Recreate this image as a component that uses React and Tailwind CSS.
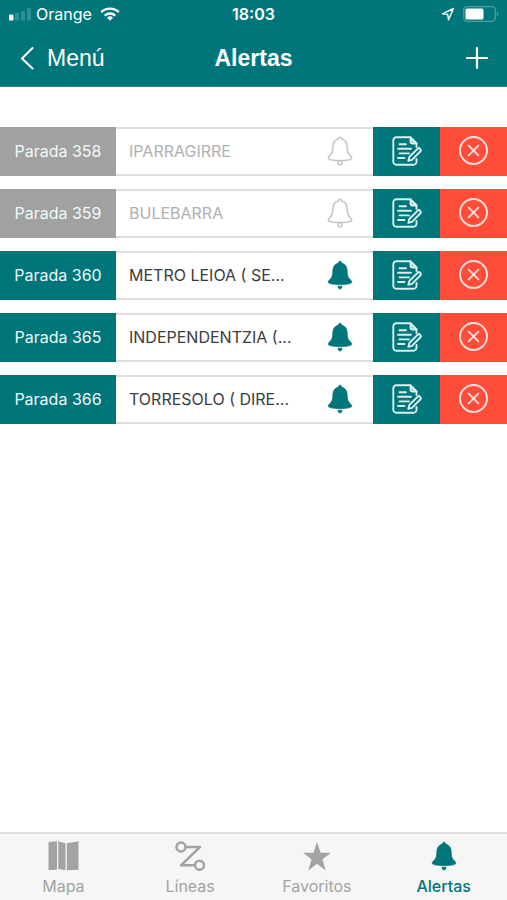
import React, { useState } from 'react';

const initialAlerts = [
  { stop: 358, name: 'IPARRAGIRRE', active: false },
  { stop: 359, name: 'BULEBARRA', active: false },
  { stop: 360, name: 'METRO LEIOA ( SE...', active: true },
  { stop: 365, name: 'INDEPENDENTZIA (...', active: true },
  { stop: 366, name: 'TORRESOLO ( DIRE...', active: true },
];

function BellIcon({ filled, className }) {
  return (
    <svg
      viewBox="0 0 26 30"
      className={className}
      fill={filled ? 'currentColor' : 'none'}
      stroke="currentColor"
      strokeWidth={filled ? 0.8 : 1.5}
      strokeLinejoin="round"
      aria-hidden="true"
    >
      <path d="M13 1.200c-1.100 0-1.700.9-1.500 1.900C8.100 3.900 6 6.500 5.900 10.200c-.1 4.600-.5 6.600-2.500 8.900C2.400 20.300 1.200 21.100 1.200 22.100c0 1.600 5.300 2.500 11.800 2.500s11.800-.9 11.800-2.500c0-1-1.200-1.800-2.200-3-2-2.300-2.400-4.300-2.500-8.900-.1-3.700-2.200-6.300-5.600-7.100.2-1-.4-1.900-1.500-1.900z" />
      {filled ? (
        <path d="M11 26.300h4c.1 1.500-.8 2.600-2 2.600s-2.100-1.100-2-2.600z" />
      ) : (
        <circle cx="13" cy="26.800" r="2" />
      )}
    </svg>
  );
}

function EditIcon() {
  return (
    <svg
      viewBox="0 0 30 30"
      className="w-[30px] h-[30px]"
      fill="none"
      stroke="currentColor"
      strokeWidth="1.9"
      strokeLinecap="round"
      strokeLinejoin="round"
      aria-hidden="true"
    >
      <path d="M24.500 11V7.500L18.500 1.300H4.300a3 3 0 0 0-3 3v21.400a3 3 0 0 0 3 3h17.200a3 3 0 0 0 3-3V23" />
      <path d="M18.500 1.300v4.200a2 2 0 0 0 2 2h4z" fill="currentColor" fillOpacity="0.6" />
      <path d="M7.500 8.200h6.500M6 12.800h13M7.500 17.400h9.500M6 22h6.500" />
      <path d="M16.300 24.900l1-3.900 8.200-8.200a1.900 1.900 0 0 1 2.700 2.700L20 23.900z" />
    </svg>
  );
}

function DeleteIcon() {
  return (
    <svg
      viewBox="0 0 30 30"
      className="w-[30px] h-[30px]"
      fill="none"
      stroke="currentColor"
      strokeWidth="1.9"
      strokeLinecap="round"
      aria-hidden="true"
    >
      <circle cx="14.500" cy="14.500" r="13.500" />
      <path d="M9.700 9.700l9.600 9.600M19.300 9.700l-9.600 9.600" />
    </svg>
  );
}

function MapIcon() {
  return (
    <svg viewBox="0 0 32 30" className="w-8 h-[30px]" fill="currentColor" aria-hidden="true">
      <path d="M1.500 1l8.500-.7v28.400l-8.500.3zM11.200.3l7.300 2v27l-7.300-1.400zM19.800 2.300L31.500.3v28.400l-11.700.6z" />
    </svg>
  );
}

function LinesIcon() {
  return (
    <svg
      viewBox="0 0 30 30"
      className="w-[30px] h-[30px]"
      fill="none"
      stroke="currentColor"
      strokeWidth="2.5"
      strokeLinejoin="round"
      aria-hidden="true"
    >
      <circle cx="6" cy="6" r="4.500" />
      <circle cx="24.500" cy="24.300" r="4.500" />
      <path d="M10.500 6H25L6 24.300h14" />
    </svg>
  );
}

function StarIcon() {
  return (
    <svg viewBox="0 0 30 30" className="w-[30px] h-[30px]" fill="currentColor" aria-hidden="true">
      <path d="M15 1l3.500 10.800H29l-8.500 6.400L23.600 29.500 15 22.800 6.400 29.500l3.100-11.300L1 11.800h10.500z" />
    </svg>
  );
}

function StatusBar() {
  return (
    <div className="grid grid-cols-3 items-center h-7 px-2">
      <div className="flex items-center gap-1">
        <svg viewBox="0 0 24 14" className="w-6 h-3.5" fill="currentColor" aria-hidden="true">
          <rect x="1" y="7.500" width="4.500" height="6" rx="1" />
          <g fill="#2a9294">
            <rect x="7" y="6" width="4" height="7.500" rx="1" />
            <rect x="13" y="4" width="4" height="9.500" rx="1" />
            <rect x="19" y="1" width="4" height="12.500" rx="1" />
          </g>
        </svg>
        <span className="text-base">Orange</span>
        <svg viewBox="0 0 20 14" className="w-5 h-3.5 ml-1" fill="none" stroke="currentColor" strokeWidth="2.400" aria-hidden="true">
          <path d="M1.200 5.200a12.500 12.500 0 0 1 17.600 0" />
          <path d="M4.700 8.600a7.600 7.600 0 0 1 10.600 0" />
          <path d="M10 13.700l-3-3a4.300 4.300 0 0 1 6 0z" fill="currentColor" stroke="none" />
        </svg>
      </div>
      <span className="text-base font-semibold text-center">18:03</span>
      <div className="flex items-center justify-end gap-2">
        <svg viewBox="0 0 14 14" className="w-3.5 h-3.5" fill="none" stroke="currentColor" strokeWidth="1.400" strokeLinejoin="round" aria-hidden="true">
          <path d="M12.500 1.500L1.500 6.800l5.200.6.800 5.300z" />
        </svg>
        <svg viewBox="0 0 36 16" className="w-9 h-4" aria-hidden="true">
          <rect x="0.700" y="0.700" width="31.600" height="14.600" rx="3.500" fill="none" stroke="#4da0a2" strokeWidth="1.300" />
          <rect x="2.500" y="2.500" width="18" height="11" rx="1.500" fill="currentColor" />
          <path d="M33.800 5.500c2 .8 2 4.200 0 5z" fill="#4da0a2" />
        </svg>
      </div>
    </div>
  );
}

function Header() {
  return (
    <header className="bg-[#00757a] text-white border-b border-[#2f8488]">
      <StatusBar />
      <div className="grid grid-cols-3 items-center h-[58px] pt-0.5 px-4">
        <button type="button" className="flex items-center gap-[7px] text-[23px] font-['Liberation_Sans',sans-serif]">
          <svg viewBox="0 0 24 24" className="w-6 h-6" fill="none" stroke="currentColor" strokeWidth="2" strokeLinecap="round" strokeLinejoin="round" aria-hidden="true">
            <path d="M16.500 2L6 12.500 16.500 22.500" />
          </svg>
          Menú
        </button>
        <h1 className="text-[23px] font-bold text-center font-['Liberation_Sans',sans-serif]">Alertas</h1>
        <button type="button" aria-label="Añadir" className="justify-self-end">
          <svg viewBox="0 0 24 24" className="w-7 h-6" fill="none" stroke="currentColor" strokeWidth="2.200" strokeLinecap="round" aria-hidden="true">
            <path d="M12 2v20M2 12h20" />
          </svg>
        </button>
      </div>
    </header>
  );
}

function AlertRow({ alert, onToggle, onDelete }) {
  return (
    <li className="flex h-[49px]">
      <div
        className={`flex items-center justify-center w-[116px] shrink-0 pb-0.5 text-base text-[#eefafa] ${
          alert.active ? 'bg-[#00757a]' : 'bg-[#a1a1a1]'
        }`}
      >
        Parada {alert.stop}
      </div>
      <div className="flex flex-1 min-w-0 items-center justify-between pl-[13px] pr-5 pb-0.5 border-y-2 border-[#dedede]">
        <span className={`text-base truncate ${alert.active ? 'text-[#3c3c3c]' : 'text-[#b0b0b0]'}`}>
          {alert.name}
        </span>
        <button
          type="button"
          onClick={onToggle}
          aria-label="Activar alerta"
          className={alert.active ? 'text-[#00757a]' : 'text-[#c4c4c4]'}
        >
          <BellIcon filled={alert.active} className="w-[26px] h-[30px]" />
        </button>
      </div>
      <button
        type="button"
        aria-label="Editar"
        className="flex items-center justify-center w-[67px] shrink-0 pb-0.5 bg-[#00757a] text-[#d8f0f0]"
      >
        <EditIcon />
      </button>
      <button
        type="button"
        onClick={onDelete}
        aria-label="Eliminar"
        className="flex items-center justify-center w-[67px] shrink-0 pb-0.5 bg-[#ff4d3a] text-[#ffe0dc]"
      >
        <DeleteIcon />
      </button>
    </li>
  );
}

function TabBar() {
  const tabs = [
    { label: 'Mapa', icon: <MapIcon /> },
    { label: 'Líneas', icon: <LinesIcon /> },
    { label: 'Favoritos', icon: <StarIcon /> },
    { label: 'Alertas', icon: <BellIcon filled className="w-[26px] h-[30px]" />, active: true },
  ];

  return (
    <nav className="grid grid-cols-4 bg-[#f6f6f6] border-t-2 border-[#dfdfdf]">
      {tabs.map((tab) => (
        <a
          key={tab.label}
          href="#"
          className={`flex flex-col items-center gap-[3px] pt-[7px] pb-0.5 text-base leading-6 ${
            tab.active ? 'text-[#00757a] font-medium' : 'text-[#a3a3a3]'
          }`}
        >
          {tab.icon}
          {tab.label}
        </a>
      ))}
    </nav>
  );
}

export default function App() {
  const [alerts, setAlerts] = useState(initialAlerts);

  const toggle = (stop) => {
    setAlerts(alerts.map((a) => (a.stop === stop ? { ...a, active: !a.active } : a)));
  };

  const remove = (stop) => {
    setAlerts(alerts.filter((a) => a.stop !== stop));
  };

  return (
    <div className="flex flex-col min-h-screen bg-white font-['Inter',sans-serif]">
      <Header />
      <main className="flex-1 pt-10">
        <ul className="flex flex-col gap-[13px]">
          {alerts.map((alert) => (
            <AlertRow
              key={alert.stop}
              alert={alert}
              onToggle={() => toggle(alert.stop)}
              onDelete={() => remove(alert.stop)}
            />
          ))}
        </ul>
      </main>
      <TabBar />
    </div>
  );
}
